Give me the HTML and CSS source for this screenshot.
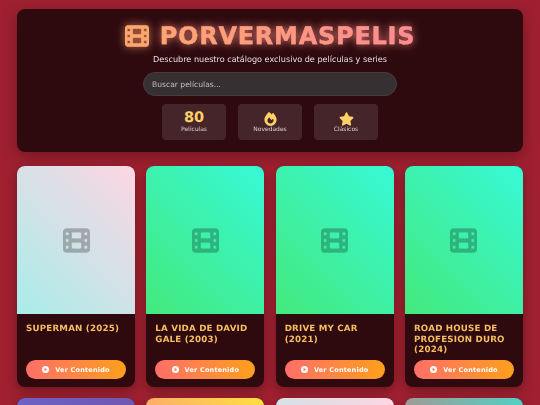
FILE: index.html
```html
<!DOCTYPE html>
<html lang="es">
<head>
<meta charset="utf-8">
<title>PorVerMasPelis</title>
<link rel="stylesheet" href="styles.css">
</head>
<body>
<svg class="defs" width="0" height="0" aria-hidden="true">
  <symbol id="film" viewBox="0 0 512 512"><path d="M0 96C0 60.7 28.7 32 64 32l384 0c35.3 0 64 28.7 64 64l0 320c0 35.3-28.7 64-64 64L64 480c-35.3 0-64-28.7-64-64L0 96zM48 368l0 32c0 8.8 7.2 16 16 16l32 0c8.8 0 16-7.2 16-16l0-32c0-8.8-7.2-16-16-16l-32 0c-8.8 0-16 7.2-16 16zm368-16c-8.8 0-16 7.2-16 16l0 32c0 8.8 7.2 16 16 16l32 0c8.8 0 16-7.2 16-16l0-32c0-8.8-7.2-16-16-16l-32 0zM48 240l0 32c0 8.8 7.2 16 16 16l32 0c8.8 0 16-7.2 16-16l0-32c0-8.8-7.2-16-16-16l-32 0c-8.8 0-16 7.2-16 16zm368-16c-8.8 0-16 7.2-16 16l0 32c0 8.8 7.2 16 16 16l32 0c8.8 0 16-7.2 16-16l0-32c0-8.8-7.2-16-16-16l-32 0zM48 112l0 32c0 8.8 7.2 16 16 16l32 0c8.8 0 16-7.2 16-16l0-32c0-8.8-7.2-16-16-16L64 96c-8.8 0-16 7.2-16 16zM416 96c-8.8 0-16 7.2-16 16l0 32c0 8.8 7.2 16 16 16l32 0c8.8 0 16-7.2 16-16l0-32c0-8.8-7.2-16-16-16l-32 0zM160 128l0 64c0 17.7 14.3 32 32 32l128 0c17.7 0 32-14.3 32-32l0-64c0-17.7-14.3-32-32-32L192 96c-17.7 0-32 14.3-32 32zm32 160c-17.7 0-32 14.3-32 32l0 64c0 17.7 14.3 32 32 32l128 0c17.7 0 32-14.3 32-32l0-64c0-17.7-14.3-32-32-32l-128 0z"/></symbol>
  <symbol id="fire" viewBox="0 0 448 512"><path d="M159.3 5.4c7.8-7.3 19.9-7.2 27.7 .1c27.6 25.9 53.5 53.8 77.7 84c11-14.4 23.5-30.1 37-42.9c7.9-7.4 20.1-7.4 28 .1c34.6 33 63.9 76.6 84.5 118c20.3 40.8 33.8 82.5 33.8 111.9C448 404.2 348.2 512 224 512C98.4 512 0 404.1 0 276.5c0-38.4 17.8-85.3 45.4-131.7C73.3 97.7 112.7 48.6 159.3 5.4zM225.7 416c25.3 0 47.7-7 68.8-21c42.1-29.4 53.4-88.2 28.1-134.4c-4.5-9-16-9.6-22.5-2l-25.2 29.3c-6.6 7.6-18.5 7.4-24.7-.5c-16.5-21-46-58.5-62.8-79.8c-6.3-8-18.3-8.1-24.7-.1c-33.8 42.5-50.8 69.3-50.8 99.4C112 375.4 162.6 416 225.7 416z"/></symbol>
  <symbol id="star" viewBox="0 0 576 512"><path d="M316.9 18C311.6 7 300.4 0 288.1 0s-23.4 7-28.8 18L195 150.3 51.4 171.5c-12 1.8-22 10.2-25.7 21.7s-.7 24.2 7.9 32.7L137.8 329 113.2 474.7c-2 12 3 24.2 12.9 31.3s23 8 33.8 2.3l128.3-68.5 128.3 68.5c10.8 5.7 23.9 4.9 33.8-2.3s14.9-19.3 12.9-31.3L438.5 329 542.7 225.9c8.6-8.5 11.7-21.2 7.9-32.7s-13.7-19.9-25.7-21.7L381.2 150.3 316.9 18z"/></symbol>
  <symbol id="play" viewBox="0 0 512 512"><path fill-rule="evenodd" d="M256 0a256 256 0 1 0 0 512a256 256 0 1 0 0-512zM188 152c0-12 14-20 25-14l144 104c10 7 10 21 0 28l-144 104c-11 6-25-2-25-14z"/></symbol>
</svg>

<header class="hero">
  <h1 class="brand">
    <span class="brand-icon"><svg class="brand-svg"><use href="#film"/></svg></span>
    <span class="brand-text">PORVERMASPELIS</span>
  </h1>
  <p class="tagline">Descubre nuestro catálogo exclusivo de películas y series</p>
  <div class="search"><input class="search-input" type="text" placeholder="Buscar películas..."></div>
  <div class="stats">
    <div class="stat"><span class="stat-value">80</span><span class="stat-label">Películas</span></div>
    <div class="stat"><svg class="stat-icon"><use href="#fire"/></svg><span class="stat-label">Novedades</span></div>
    <div class="stat"><svg class="stat-icon"><use href="#star"/></svg><span class="stat-label">Clásicos</span></div>
  </div>
</header>

<main class="grid">
  <article class="card">
    <div class="poster poster-frost"><svg class="poster-icon"><use href="#film"/></svg></div>
    <div class="card-body">
      <h2 class="card-title">SUPERMAN (2025)</h2>
      <a class="btn" href="#"><svg class="btn-icon"><use href="#play"/></svg>Ver Contenido</a>
    </div>
  </article>
  <article class="card">
    <div class="poster poster-green"><svg class="poster-icon"><use href="#film"/></svg></div>
    <div class="card-body">
      <h2 class="card-title">LA VIDA DE DAVID GALE (2003)</h2>
      <a class="btn" href="#"><svg class="btn-icon"><use href="#play"/></svg>Ver Contenido</a>
    </div>
  </article>
  <article class="card">
    <div class="poster poster-green"><svg class="poster-icon"><use href="#film"/></svg></div>
    <div class="card-body">
      <h2 class="card-title">DRIVE MY CAR (2021)</h2>
      <a class="btn" href="#"><svg class="btn-icon"><use href="#play"/></svg>Ver Contenido</a>
    </div>
  </article>
  <article class="card">
    <div class="poster poster-green"><svg class="poster-icon"><use href="#film"/></svg></div>
    <div class="card-body">
      <h2 class="card-title">ROAD HOUSE DE PROFESION DURO (2024)</h2>
      <a class="btn" href="#"><svg class="btn-icon"><use href="#play"/></svg>Ver Contenido</a>
    </div>
  </article>
  <article class="card"><div class="poster poster-purple"></div></article>
  <article class="card"><div class="poster poster-sun"></div></article>
  <article class="card"><div class="poster poster-pale"></div></article>
  <article class="card"><div class="poster poster-teal"></div></article>
</main>
</body>
</html>
```
FILE: styles.css
```css
* { box-sizing: border-box; }
html, body { height: 100%; }
html { overflow: hidden; }
body {
  margin: 0;
  padding: 9px 17px;
  background: #a02030;
  font-family: "DejaVu Sans", sans-serif;
  text-rendering: geometricPrecision;
  overflow: hidden;
  filter: blur(.25px);
}
.defs { position: absolute; }
.hero {
  height: 143px;
  padding-top: 11px;
  background: #2e0a0e;
  border-radius: 8px;
  box-shadow: 0 4px 16px rgba(0,0,0,.3);
  display: flex;
  flex-direction: column;
  align-items: center;
}
.brand {
  margin: 0;
  height: 32px;
  display: flex;
  align-items: center;
  gap: 11px;
  font-size: 24px;
  line-height: 32px;
  font-weight: 700;
  letter-spacing: .75px;
}
.brand-icon { display: flex; filter: drop-shadow(0 0 4px rgba(255,160,110,.8)); }
.brand-svg { width: 24px; height: 24px; fill: #fda66e; stroke: #fda66e; stroke-width: 14px; overflow: visible; }
.brand-text {
  background: linear-gradient(90deg, #ffa56f, #ff8a96);
  -webkit-background-clip: text;
  background-clip: text;
  color: transparent;
  -webkit-text-stroke: .3px rgba(255,160,130,.8);
  filter: drop-shadow(0 0 4px rgba(255,140,130,.85));
}
.tagline {
  margin: 0;
  font-size: 8.1px;
  line-height: 14px;
  color: #e6dede;
}
.search { margin-top: 6px; width: 254px; }
.search-input {
  display: block;
  width: 100%;
  height: 24px;
  padding: 0 8px;
  border: 1px solid #4a3c3e;
  border-radius: 12px;
  background: #363032;
  color: #fff;
  font: 7.6px "DejaVu Sans", sans-serif;
  text-rendering: geometricPrecision;
}
.search-input::placeholder { color: #c4bfbf; opacity: 1; }
.stats { display: flex; gap: 12px; margin-top: 8px; }
.stat {
  width: 64px;
  height: 36px;
  background: #46252a;
  border-radius: 4px;
  display: flex;
  flex-direction: column;
  align-items: center;
  justify-content: flex-end;
  padding-bottom: 6px;
}
.stat-value {
  font-size: 14.5px;
  line-height: 16px;
  font-weight: 700;
  color: #ffd166;
}
.stat-icon { width: 15px; height: 14px; fill: #ffd166; }
.stat-label {
  font-size: 6px;
  line-height: 8px;
  color: #dcd2d2;
}
.grid {
  display: grid;
  grid-template-columns: repeat(4, 118px);
  column-gap: 11.33px;
  row-gap: 11px;
  margin-top: 14px;
}
.card {
  height: 221px;
  background: #2e0a0e;
  border-radius: 8px;
  overflow: hidden;
  box-shadow: 0 4px 12px rgba(0,0,0,.3);
}
.poster {
  height: 148px;
  display: flex;
  align-items: center;
  justify-content: center;
}
.poster-frost { background: linear-gradient(45deg, #a8edea, #fed6e3); }
.poster-green { background: linear-gradient(45deg, #43e97b, #38f9d7); }
.poster-purple { background: linear-gradient(135deg, #6c62c6, #744a98); }
.poster-sun { background: linear-gradient(45deg, #fa709a, #fee140); }
.poster-pale { background: linear-gradient(45deg, #a8edea, #fed6e3); }
.poster-teal { background: linear-gradient(90deg, #a09a96, #52d0c4); }
.poster-icon { width: 27px; height: 27px; fill: #000; stroke: #000; stroke-width: 14px; opacity: .25; overflow: visible; }
.card-body {
  height: 73px;
  padding: 10px 9px 8px;
  display: flex;
  flex-direction: column;
  justify-content: space-between;
}
.card-title {
  margin: 0;
  font-size: 8.7px;
  line-height: 10.7px;
  font-weight: 700;
  letter-spacing: .2px;
  color: #f5bd62;
}
.btn {
  height: 19px;
  border-radius: 10px;
  background: linear-gradient(90deg, #ff6f69, #ff9f1c);
  color: #fff;
  font-size: 6.5px;
  font-weight: 700;
  letter-spacing: .2px;
  text-decoration: none;
  display: flex;
  align-items: center;
  justify-content: center;
  gap: 6px;
}
.btn-icon { width: 7px; height: 7px; fill: #fff; }
```
